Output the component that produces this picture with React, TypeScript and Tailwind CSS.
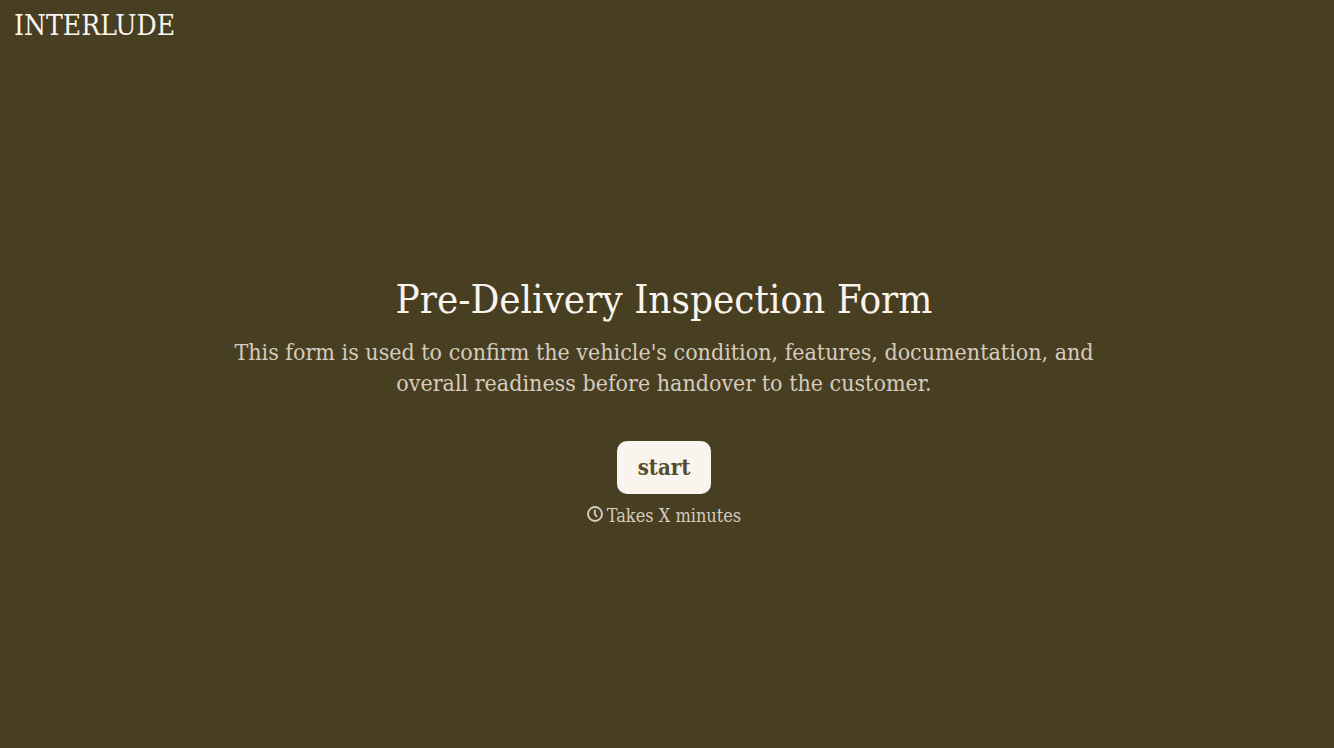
function ClockIcon() {
  return (
    <svg
      aria-hidden="true"
      viewBox="0 0 16 16"
      className="size-4 shrink-0"
      fill="none"
      stroke="currentColor"
      strokeWidth="1.9"
    >
      <circle cx="8" cy="8" r="7" />
      <path d="M7.8 3.8V8l2.2 3" />
    </svg>
  );
}

export default function App() {
  return (
    <div className="flex min-h-screen flex-col bg-[#483e22] font-['DejaVu_Serif_Condensed','DejaVu_Serif',serif] text-[#f9f4ee]">
      <header className="flex h-13 items-center px-3.5">
        <span className="text-[28px] leading-8">INTERLUDE</span>
      </header>
      <main className="flex flex-1 flex-col items-center justify-center pr-1.5 pb-3 pt-3 text-center">
        <h1 className="text-[40px] leading-[52px]">Pre-Delivery Inspection Form</h1>
        <p className="mt-3 max-w-[880px] text-[23px] leading-[31px] text-[#d5ccbe]">
          This form is used to confirm the vehicle's condition, features, documentation, and overall
          readiness before handover to the customer.
        </p>
        <button
          type="button"
          className="mt-[42px] h-[53px] rounded-[10px] bg-[#f9f4ee] px-[21px] text-[22px] font-bold text-[#574c2b]"
        >
          start
        </button>
        <div className="mt-2.5 flex items-start gap-1 text-[18px] leading-6 text-[#d5ccbe]">
          <span className="flex h-5 items-center">
            <ClockIcon />
          </span>
          <span>Takes X minutes</span>
        </div>
      </main>
    </div>
  );
}
